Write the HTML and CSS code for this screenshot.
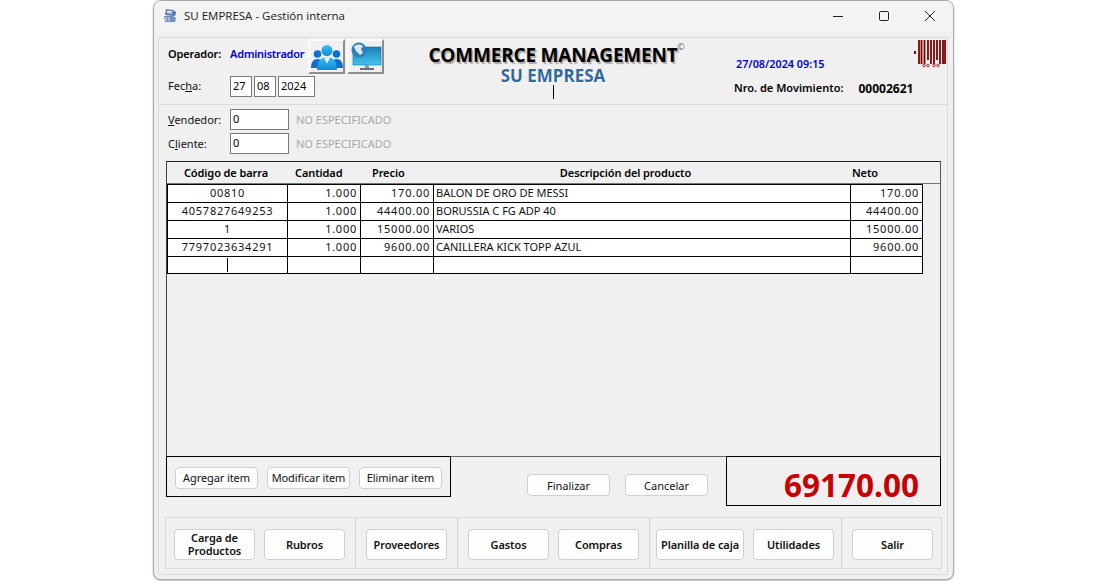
FILE: index.html
```html
<!DOCTYPE html>
<html lang="es">
<head>
    <meta charset="UTF-8">
    <title>SU EMPRESA - Gestión interna</title>
    <link rel="stylesheet" href="styles.css">
</head>
<body>
    <div class="window">
        <div class="titlebar">
            <svg class="app-icon" width="16" height="16" viewBox="0 0 16 16">
                <path d="M4 1l8 1-1 6-8-1z" fill="#5a7fb0"/>
                <path d="M5 3l5 .6M5 4.5l5 .6" stroke="#fff" stroke-width="1"/>
                <path d="M2 8l9 0 3 2-1 4-10 0z" fill="#6f8fb5"/>
                <path d="M3 10h2M6 10h2M3 12h2M6 12h2" stroke="#e6eef8" stroke-width="1"/>
                <path d="M12 3l2 1-1 4-2-.5z" fill="#3b5d8a"/>
            </svg>
            <span class="title">SU EMPRESA - Gestión interna</span>
            <div class="controls">
                <svg width="12" height="12" viewBox="0 0 12 12"><path d="M1 6.500h10" stroke="#222" stroke-width="1"/></svg>
                <svg width="12" height="12" viewBox="0 0 12 12"><rect x="1.500" y="1.500" width="9" height="9" rx="1.200" fill="none" stroke="#222" stroke-width="1"/></svg>
                <svg width="12" height="12" viewBox="0 0 12 12"><path d="M1 1l10 10M11 1L1 11" stroke="#222" stroke-width="1"/></svg>
            </div>
        </div>

        <div class="client">
            <div class="head">
                <div class="head-left">
                    <div class="operator-row">
                        <span class="label-bold">Operador:</span>
                        <span class="operator">Administrador</span>
                        <button class="icon-btn">
                            <svg width="32" height="28" viewBox="0 0 32 28">
                                <defs>
                                    <linearGradient id="pblue" x1="0" y1="0" x2="0" y2="1">
                                        <stop offset="0" stop-color="#3cc0f2"/>
                                        <stop offset="1" stop-color="#0f8ad8"/>
                                    </linearGradient>
                                </defs>
                                <circle cx="6.500" cy="11" r="3.800" fill="#0c6fd0"/>
                                <path d="M0 25c0-6 2.500-9 6.500-9s7 3 7 9z" fill="#0c6fd0"/>
                                <circle cx="25.500" cy="11" r="3.800" fill="#0c6fd0"/>
                                <path d="M18.500 25c0-6 3-9 7-9s6.500 3 6.500 9z" fill="#0c6fd0"/>
                                <circle cx="16" cy="7.500" r="5.500" fill="url(#pblue)"/>
                                <path d="M6 27c0-9 4-13 10-13s10 4 10 13z" fill="url(#pblue)"/>
                                <path d="M13 14.500l3 6 3-6z" fill="#fff"/>
                            </svg>
                        </button>
                        <button class="icon-btn">
                            <svg width="32" height="30" viewBox="0 0 32 30">
                                <defs>
                                    <linearGradient id="screen" x1="0" y1="0" x2="0" y2="1">
                                        <stop offset="0" stop-color="#1a80c0"/>
                                        <stop offset="1" stop-color="#42c6ea"/>
                                    </linearGradient>
                                </defs>
                                <rect x="3" y="5" width="28" height="18" fill="url(#screen)" stroke="#1a6f9f" stroke-width=".6"/>
                                <rect x="15" y="23" width="4" height="3" fill="#8a9aa5"/>
                                <rect x="10" y="26" width="14" height="2" fill="#5f6f7a"/>
                                <circle cx="9" cy="8" r="7.500" fill="#2f7fb4"/>
                                <path d="M4 5c2-3 6-3 9-1l-2 3 2 4-3 2-4-4z" fill="#d8e8f3"/>
                            </svg>
                        </button>
                    </div>
                    <div class="date-row">
                        <span class="label">Fec<u>h</u>a:</span>
                        <div class="date-fields">
                            <span class="box day">27</span>
                            <span class="box day">08</span>
                            <span class="box year">2024</span>
                        </div>
                    </div>
                </div>
                <div class="head-center">
                    <div class="brand">COMMERCE MANAGEMENT<span class="copy">©</span></div>
                    <div class="company">SU EMPRESA</div>
                    <div class="caret"></div>
                </div>
                <div class="head-right">
                    <svg class="barcode" width="32" height="28" viewBox="0 0 32 28">
                        <rect x="0" y="11" width="2" height="3" fill="#8b0000"/>
                        <path d="M5 0v24M7.500 0v24M10.500 0v24M14 0v20M17 0v24M20 0v24M23 0v20M26 0v24M29 0v24M31 0v24" stroke="#800000" stroke-width="1.800"/>
                        <circle cx="10" cy="25.500" r="1.300" fill="none" stroke="#8b0000" stroke-width=".8"/>
                        <circle cx="14" cy="25.500" r="1.300" fill="none" stroke="#8b0000" stroke-width=".8"/>
                        <circle cx="20" cy="25.500" r="1.300" fill="none" stroke="#8b0000" stroke-width=".8"/>
                        <circle cx="24" cy="25.500" r="1.300" fill="none" stroke="#8b0000" stroke-width=".8"/>
                    </svg>
                    <div class="clock">27/08/2024 09:15</div>
                    <div class="movement">
                        <span class="label-bold">Nro. de Movimiento:</span>
                        <span class="movement-no">00002621</span>
                    </div>
                </div>
            </div>

            <div class="people">
                <div class="person-row">
                    <span class="label"><u>V</u>endedor:</span>
                    <span class="box code">0</span>
                    <span class="unset">NO ESPECIFICADO</span>
                </div>
                <div class="person-row">
                    <span class="label">C<u>l</u>iente:</span>
                    <span class="box code">0</span>
                    <span class="unset">NO ESPECIFICADO</span>
                </div>
            </div>

            <div class="items">
                <div class="items-head">
                    <span class="c-code">Código de barra</span>
                    <span class="c-qty">Cantidad</span>
                    <span class="c-price">Precio</span>
                    <span class="c-desc">Descripción del producto</span>
                    <span class="c-net">Neto</span>
                </div>
                <div class="rows">
                    <div class="row"><span class="center">00810</span><span class="num">1.000</span><span class="num">170.00</span><span>BALON DE ORO DE MESSI</span><span class="num">170.00</span></div>
                    <div class="row"><span class="center">4057827649253</span><span class="num">1.000</span><span class="num">44400.00</span><span>BORUSSIA C FG ADP 40</span><span class="num">44400.00</span></div>
                    <div class="row"><span class="center">1</span><span class="num">1.000</span><span class="num">15000.00</span><span>VARIOS</span><span class="num">15000.00</span></div>
                    <div class="row"><span class="center">7797023634291</span><span class="num">1.000</span><span class="num">9600.00</span><span>CANILLERA KICK TOPP AZUL</span><span class="num">9600.00</span></div>
                    <div class="row row-new"><span class="cursor-cell"></span><span></span><span></span><span></span><span></span></div>
                </div>
            </div>

            <div class="actions">
                <div class="item-actions">
                    <button class="btn">Agregar item</button>
                    <button class="btn">Modificar item</button>
                    <button class="btn">Eliminar item</button>
                </div>
                <div class="doc-actions">
                    <button class="btn">Finalizar</button>
                    <button class="btn">Cancelar</button>
                </div>
                <div class="total">69170.00</div>
            </div>

            <div class="menu">
                <div class="group group-1">
                    <button class="btn menu-btn">Carga de Productos</button>
                    <button class="btn menu-btn">Rubros</button>
                </div>
                <div class="group group-2">
                    <button class="btn menu-btn">Proveedores</button>
                </div>
                <div class="group group-3">
                    <button class="btn menu-btn">Gastos</button>
                    <button class="btn menu-btn">Compras</button>
                </div>
                <div class="group group-4">
                    <button class="btn menu-btn wide">Planilla de caja</button>
                    <button class="btn menu-btn">Utilidades</button>
                </div>
                <div class="group group-5">
                    <button class="btn menu-btn">Salir</button>
                </div>
            </div>
        </div>
    </div>
</body>
</html>
```

FILE: styles.css
```css
* {
    box-sizing: border-box;
}
body {
    margin: 0;
    height: 581px;
    overflow: hidden;
    background: white;
    font-family: "Noto Sans", sans-serif;
    font-size: 11px;
    color: #000;
}
button {
    font-family: inherit;
}
.window {
    width: 801px;
    height: 580px;
    margin-left: 153px;
    background: #f0f0f0;
    border: 1px solid #a8a8a8;
    border-radius: 8px;
    box-shadow: 0 1px 2px rgba(0, 0, 0, 0.25);
    overflow: hidden;
}

/* title bar */
.titlebar {
    height: 31px;
    background: #f3f3f3;
    display: flex;
    align-items: center;
    padding: 0 0 2px 8px;
}
.app-icon {
    margin-right: 6px;
}
.title {
    font-family: "Open Sans", sans-serif;
    font-size: 11.500px;
    color: #1a1a1a;
}
.controls {
    margin-left: auto;
    display: flex;
    gap: 34px;
    padding-right: 17px;
}

/* header */
.client {
    margin: 5px 5px 0 4px;
    height: 538px;
    border: 1px solid #dcdcdc;
}
.head {
    height: 67px;
    border-bottom: 1px solid #dcdcdc;
    display: flex;
}
.head-left {
    width: 265px;
    padding: 1px 0 0 9px;
}
.operator-row {
    display: flex;
    align-items: center;
    height: 35px;
}
.operator-row span {
    margin-bottom: 6px;
}
.label-bold {
    font-weight: 600;
    letter-spacing: -0.150px;
}
.operator {
    font-weight: 600;
    color: #0000cc;
    letter-spacing: -0.250px;
    margin-left: 9px;
    margin-right: 4px;
}
.icon-btn {
    width: 37px;
    height: 35px;
    padding: 0;
    margin-right: 2px;
    background: #f0f0f0;
    border: 2px solid;
    border-color: #fafafa #8c8c8c #8c8c8c #fafafa;
    display: flex;
    align-items: center;
    justify-content: center;
}
.date-row {
    display: flex;
    align-items: center;
    height: 21px;
    margin-top: 2px;
}
.label {
    color: #111;
}
.date-row .label {
    width: 62px;
    margin-bottom: 2px;
}
.date-fields {
    display: flex;
    gap: 2px;
}
.box {
    background: white;
    border: 1px solid #7a7a7a;
    padding-left: 2px;
    height: 21px;
    line-height: 17px;
    font-size: 11px;
}
.day {
    width: 22px;
}
.year {
    width: 37px;
}
.head-center {
    width: 258px;
    display: flex;
    flex-direction: column;
    align-items: center;
    padding-top: 5px;
}
.brand {
    position: relative;
    font-family: "Open Sans", sans-serif;
    font-weight: 700;
    font-size: 19px;
    line-height: 24px;
    letter-spacing: -0.200px;
    white-space: nowrap;
    text-shadow: 1.500px 1.500px 1px #a9a9a9;
}
.copy {
    position: absolute;
    top: -8px;
    right: -7px;
    font-size: 9px;
    font-weight: 400;
    color: #666;
    text-shadow: none;
}
.company {
    font-family: "Open Sans", sans-serif;
    font-weight: 700;
    font-size: 17px;
    line-height: 18px;
    color: #336a9c;
    text-shadow: 1px 1px 0 #fff;
}
.caret {
    width: 1px;
    height: 14px;
    background: #000;
}
.head-right {
    flex: 1;
    position: relative;
    padding: 18px 0 0 52px;
}
.barcode {
    position: absolute;
    top: 2px;
    right: 1px;
}
.clock {
    margin-left: 2px;
    font-weight: 600;
    color: #0000cc;
    font-size: 10.800px;
}
.movement {
    display: flex;
    align-items: flex-end;
    margin-top: 7px;
}
.movement .label-bold {
    letter-spacing: 0;
}
.movement-no {
    margin-left: 15px;
    font-weight: 700;
    font-size: 12px;
    position: relative;
    top: 2px;
}

/* vendedor / cliente */
.people {
    padding: 4px 0 0 9px;
    height: 56px;
    display: flex;
    flex-direction: column;
    gap: 3px;
}
.person-row {
    display: flex;
    align-items: center;
}
.person-row .label {
    width: 62px;
}
.code {
    width: 59px;
}
.unset {
    margin-left: 7px;
    color: #a9a9a9;
}

/* items table */
.items {
    margin-left: 7px;
    width: 775px;
    height: 296px;
    border: 1px solid #222;
    border-bottom-color: #666;
    border-right-color: #555;
    border-left-color: #444;
}
.items-head {
    height: 22px;
    display: grid;
    grid-template-columns: 120px 73px 73px 417px 1fr;
    font-weight: 600;
    line-height: 21px;
    letter-spacing: -0.100px;
    border-bottom: 1px solid #777;
}
.c-code {
    text-align: center;
    padding-right: 2px;
}
.c-qty {
    padding-left: 8px;
}
.c-price {
    padding-left: 12px;
}
.c-desc {
    text-align: center;
    padding-right: 32px;
}
.c-net {
    padding-left: 2px;
}
.rows {
    width: 756px;
    border-bottom: 1px solid #000;
    border-right: 1px solid #000;
    border-left: 1px solid #000;
}
.row {
    display: grid;
    grid-template-columns: 120px 73px 73px 417px 1fr;
    height: 18px;
    line-height: 15px;
    background: white;
    border-top: 1px solid #000;
    color: #111;
}
.row span {
    border-right: 1px solid #000;
    padding: 0 2px;
    white-space: nowrap;
}
.row span:last-child {
    border-right: none;
}
.center {
    text-align: center;
    letter-spacing: 0.750px;
}
.row .num {
    text-align: right;
    letter-spacing: 0.750px;
    padding-right: 3px;
}
.row-new {
    height: 17px;
}
.cursor-cell {
    position: relative;
}
.cursor-cell::after {
    content: "";
    position: absolute;
    left: 59px;
    top: 1px;
    width: 1px;
    height: 14px;
    background: #000;
}

/* lower buttons and total */
.actions {
    margin-left: 7px;
    width: 775px;
    height: 50px;
    display: flex;
    align-items: flex-start;
    margin-top: -1px;
}
.btn {
    width: 83px;
    height: 22px;
    padding: 0 0 1px;
    background: #fdfdfd;
    border: 1px solid #d0d0d0;
    border-radius: 4px;
    font-size: 11px;
    color: #111;
    letter-spacing: -0.100px;
}
.item-actions {
    width: 285px;
    height: 41px;
    border: 1px solid #000;
    padding: 10px 0 0 8px;
    display: flex;
    gap: 9px;
}
.doc-actions {
    width: 275px;
    padding: 18px 0 0 76px;
    display: flex;
    gap: 15px;
}
.doc-actions .btn {
    padding: 0;
    letter-spacing: 0;
}
.total {
    width: 215px;
    height: 50px;
    border: 1px solid #000;
    text-align: right;
    padding-right: 21px;
    font-weight: 700;
    font-size: 31.500px;
    line-height: 55px;
    color: #c80000;
}

/* bottom menu */
.menu {
    margin: 11px 0 0 6px;
    width: 777px;
    height: 52px;
    border: 1px solid #dcdcdc;
    display: flex;
}
.group {
    border-right: 1px solid #d2d2d2;
    padding-top: 11px;
    display: flex;
    gap: 9px;
}
.group-1 {
    width: 190px;
    padding-left: 8px;
}
.group-2 {
    width: 102px;
    padding-left: 10px;
}
.group-3 {
    width: 192px;
    padding-left: 10px;
}
.group-4 {
    width: 192px;
    padding-left: 6px;
}
.group-5 {
    flex: 1;
    border-right: none;
    padding-left: 10px;
}
.menu-btn {
    width: 81px;
    height: 31px;
    padding: 0 0 1px;
    font-weight: 600;
    line-height: 13px;
    flex-shrink: 0;
}
.wide {
    width: 88px;
}
```
